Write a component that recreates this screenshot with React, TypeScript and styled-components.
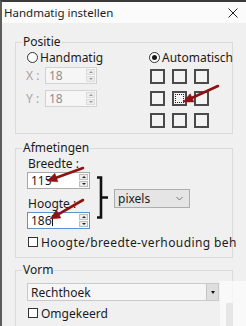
import styled, { createGlobalStyle } from 'styled-components';

const GlobalStyle = createGlobalStyle`
  html, body {
    margin: 0;
    padding: 0;
    background: #f0f0f0;
  }
  body {
    font-family: 'Noto Sans', 'Liberation Sans', sans-serif;
  }
`;

const Frame = styled.div`
  position: relative;
  width: 246px;
  height: 326px;
  box-sizing: border-box;
  border-top: 2px solid #3a3a3a;
  border-left: 2px solid #5c5c5c;
  background: #f0f0f0;
  overflow: hidden;
  font-size: 12px;
  color: #1b1b1b;
`;

const TitleBar = styled.div`
  height: 21px;
  display: flex;
  align-items: center;
  justify-content: space-between;
  padding: 0 8px 0 2px;
  background: #fbfbfb;
  font-size: 11.5px;
`;

const Body = styled.div`
  display: flex;
  flex-direction: column;
  padding: 12px 0 0 13px;
`;

const Group = styled.fieldset<{ $pb: number; $mt?: number }>`
  margin: ${(p) => p.$mt || 0}px 0 0 0;
  padding: 0 0 ${(p) => p.$pb}px 0;
  width: 218px;
  min-width: 0;
  box-sizing: border-box;
  border: 1px solid #dadada;
`;

const Legend = styled.legend`
  margin-left: 6px;
  padding: 0 1px;
  height: 14px;
  line-height: 14px;
`;

const Columns = styled.div`
  display: flex;
  padding-left: 11px;
`;

const Column = styled.div<{ $w?: number }>`
  display: flex;
  flex-direction: column;
  flex: none;
  width: ${(p) => (p.$w ? `${p.$w}px` : 'auto')};
`;

const RadioRow = styled.label`
  display: flex;
  align-items: center;
  gap: 2px;
  height: 14px;
  margin-top: 1px;
`;

const RadioDot = styled.span<{ $on?: boolean }>`
  width: 11px;
  height: 11px;
  box-sizing: border-box;
  border-radius: 50%;
  border: 1px solid #333;
  background: #fff;
  display: flex;
  align-items: center;
  justify-content: center;
  &::after {
    content: '';
    width: 5px;
    height: 5px;
    border-radius: 50%;
    background: ${(p) => (p.$on ? '#1a1a1a' : 'transparent')};
  }
`;

const FieldRow = styled.div<{ $mt: number }>`
  display: flex;
  align-items: center;
  margin-top: ${(p) => p.$mt}px;
`;

const AxisLabel = styled.span`
  width: 19px;
  margin-left: -1px;
  color: #a4a4a4;
`;

const Spin = styled.div<{ $w: number; $h: number; $off?: boolean; $focus?: boolean }>`
  display: flex;
  align-items: center;
  box-sizing: border-box;
  width: ${(p) => p.$w}px;
  height: ${(p) => p.$h}px;
  padding: 0 1px 0 3px;
  border: 1px solid ${(p) => (p.$focus ? '#5b95cf' : p.$off ? '#d2d2d2' : '#a8a8a8')};
  background: ${(p) => (p.$off ? '#f6f6f6' : '#fff')};
  color: ${(p) => (p.$off ? '#8e8e8e' : '#1b1b1b')};
`;

const SpinValue = styled.span`
  flex: 1;
  display: flex;
  align-items: center;
`;

const Caret = styled.span`
  width: 1px;
  height: 11px;
  background: #111;
`;

const SpinButtons = styled.div`
  display: flex;
  flex-direction: column;
  gap: 1px;
  width: 9px;
`;

const SpinBtn = styled.div<{ $off?: boolean; $down?: boolean }>`
  height: 6px;
  box-sizing: border-box;
  border: 1px solid ${(p) => (p.$off ? '#dcdcdc' : '#bdbdbd')};
  background: #ededed;
  display: flex;
  align-items: center;
  justify-content: center;
  &::after {
    content: '';
    border-left: 2px solid transparent;
    border-right: 2px solid transparent;
    ${(p) => (p.$down ? 'border-top' : 'border-bottom')}: 2px solid ${(p) => (p.$off ? '#9a9a9a' : '#222')};
  }
`;

const Grid = styled.div`
  display: grid;
  grid-template-columns: repeat(3, 15px);
  grid-auto-rows: 15px;
  gap: 7px;
  margin: 5px 0 0 1px;
`;

const Cell = styled.div<{ $focus?: boolean }>`
  box-sizing: border-box;
  border: 2px solid #4a4a4a;
  background: #f3f3f3;
  padding: 1px;
  &::after {
    content: '';
    display: ${(p) => (p.$focus ? 'block' : 'none')};
    height: 100%;
    box-sizing: border-box;
    border: 1px dotted #222;
  }
`;

const SizeRow = styled.div`
  display: flex;
  align-items: flex-start;
  padding-left: 11px;
`;

const FieldLabel = styled.div<{ $mt: number }>`
  height: 14px;
  line-height: 14px;
  margin: ${(p) => p.$mt}px 0 1px 1px;
`;

const Bracket = styled.svg`
  margin: 21px 0 0 7px;
  flex: none;
`;

const Select = styled.div<{ $w: number; $h: number; $mt?: number; $ml?: number; $flat?: boolean }>`
  display: flex;
  align-items: center;
  justify-content: space-between;
  flex: none;
  box-sizing: border-box;
  width: ${(p) => p.$w}px;
  height: ${(p) => p.$h}px;
  margin: ${(p) => p.$mt || 0}px 0 0 ${(p) => p.$ml || 0}px;
  padding-left: 3px;
  border: 1px solid ${(p) => (p.$flat ? '#c9c9c9' : '#adadad')};
  background: ${(p) => (p.$flat ? '#f6f6f6' : '#e5e5e5')};
`;

const Chevron = styled.svg`
  margin-right: 6px;
`;

const DropBtn = styled.div`
  width: 12px;
  height: 16px;
  box-sizing: border-box;
  border-left: 1px solid #c4c4c4;
  background: #dedede;
  display: flex;
  align-items: center;
  justify-content: center;
  &::after {
    content: '';
    border-left: 2.5px solid transparent;
    border-right: 2.5px solid transparent;
    border-top: 3px solid #111;
  }
`;

const CheckRow = styled.label<{ $mt: number; $spread?: number }>`
  display: flex;
  align-items: center;
  gap: 3px;
  height: 14px;
  margin: ${(p) => p.$mt}px 0 0 12px;
  white-space: nowrap;
  letter-spacing: ${(p) => p.$spread || 0}px;
`;

const CheckBox = styled.span`
  width: 10px;
  height: 10px;
  box-sizing: border-box;
  border: 1px solid #333;
  background: #fff;
  flex: none;
`;

const ShapePad = styled.div`
  padding-left: 11px;
`;

const Ghost = styled.div`
  position: absolute;
  left: 218px;
  top: 279px;
  width: 30px;
  height: 50px;
  background: rgba(252, 252, 252, 0.75);
  &::after {
    content: '';
    position: absolute;
    left: 6px;
    top: 22px;
    width: 7px;
    height: 30px;
    background: #e6e6e6;
  }
`;

const Overlay = styled.svg`
  position: absolute;
  left: -2px;
  top: -2px;
  pointer-events: none;
`;

function arrow(x1: number, y1: number, x2: number, y2: number) {
  const dx = x2 - x1;
  const dy = y2 - y1;
  const len = Math.hypot(dx, dy);
  const ux = dx / len;
  const uy = dy / len;
  const hl = 10;
  const hw = 4.5;
  const bx = x2 - ux * hl;
  const by = y2 - uy * hl;
  const pts = `${x2},${y2} ${bx - uy * hw},${by + ux * hw} ${bx + uy * hw},${by - ux * hw}`;
  return { line: { x1, y1, x2: bx + ux * 1, y2: by + uy * 1 }, pts };
}

const arrows = [arrow(218, 86, 183, 102), arrow(83, 168, 47, 181), arrow(83, 200, 50, 219)];

export default function App() {
  return (
    <>
      <GlobalStyle />
      <Frame>
        <TitleBar>
          <span>Handmatig instellen</span>
          <svg width="10" height="10" viewBox="0 0 10 10">
            <path d="M0.5 0.5 L9.5 9.5 M9.5 0.5 L0.5 9.5" stroke="#222" strokeWidth="1" />
          </svg>
        </TitleBar>
        <Body>
          <Group $pb={5}>
            <Legend>Positie</Legend>
            <Columns>
              <Column $w={122}>
                <RadioRow>
                  <RadioDot />
                  Handmatig
                </RadioRow>
                <FieldRow $mt={3}>
                  <AxisLabel>X :</AxisLabel>
                  <Spin $w={52} $h={17} $off>
                    <SpinValue>18</SpinValue>
                    <SpinButtons>
                      <SpinBtn $off />
                      <SpinBtn $off $down />
                    </SpinButtons>
                  </Spin>
                </FieldRow>
                <FieldRow $mt={6}>
                  <AxisLabel>Y :</AxisLabel>
                  <Spin $w={52} $h={17} $off>
                    <SpinValue>18</SpinValue>
                    <SpinButtons>
                      <SpinBtn $off />
                      <SpinBtn $off $down />
                    </SpinButtons>
                  </Spin>
                </FieldRow>
              </Column>
              <Column>
                <RadioRow>
                  <RadioDot $on />
                  Automatisch
                </RadioRow>
                <Grid>
                  {Array.from({ length: 9 }, (_, i) => (
                    <Cell key={i} $focus={i === 4} />
                  ))}
                </Grid>
              </Column>
            </Columns>
          </Group>

          <Group $pb={8} $mt={7}>
            <Legend>Afmetingen</Legend>
            <SizeRow>
              <Column>
                <FieldLabel $mt={2}>Breedte :</FieldLabel>
                <Spin $w={63} $h={17}>
                  <SpinValue>115</SpinValue>
                  <SpinButtons>
                    <SpinBtn />
                    <SpinBtn $down />
                  </SpinButtons>
                </Spin>
                <FieldLabel $mt={8}>Hoogte :</FieldLabel>
                <Spin $w={63} $h={17} $focus>
                  <SpinValue>
                    186
                    <Caret />
                  </SpinValue>
                  <SpinButtons>
                    <SpinBtn />
                    <SpinBtn $down />
                  </SpinButtons>
                </Spin>
              </Column>
              <Bracket width="12" height="43" viewBox="0 0 12 43">
                <path d="M0 1.5 H4 V41.5 H0 M4 21.5 H11" fill="none" stroke="#111" strokeWidth="2.6" />
              </Bracket>
              <Select $w={76} $h={19} $mt={34} $ml={5}>
                pixels
                <Chevron width="7" height="5" viewBox="0 0 7 5">
                  <path d="M0.5 1 L3.5 4 L6.5 1" fill="none" stroke="#777" strokeWidth="1" />
                </Chevron>
              </Select>
            </SizeRow>
            <CheckRow $mt={6} $spread={0.4}>
              <CheckBox />
              Hoogte/breedte-verhouding beh
            </CheckRow>
          </Group>

          <Group $pb={20} $mt={5}>
            <Legend>Vorm</Legend>
            <ShapePad>
              <Select $w={192} $h={18} $mt={6} $flat>
                Rechthoek
                <DropBtn />
              </Select>
            </ShapePad>
            <CheckRow $mt={5}>
              <CheckBox />
              Omgekeerd
            </CheckRow>
          </Group>
        </Body>
        <Ghost />
        <Overlay width="246" height="326" viewBox="0 0 246 326">
          {arrows.map((a, i) => (
            <g key={i} fill="#8d1212" stroke="#8d1212">
              <line {...a.line} strokeWidth="2.6" strokeLinecap="round" />
              <polygon points={a.pts} strokeWidth="0.5" />
            </g>
          ))}
        </Overlay>
      </Frame>
    </>
  );
}
